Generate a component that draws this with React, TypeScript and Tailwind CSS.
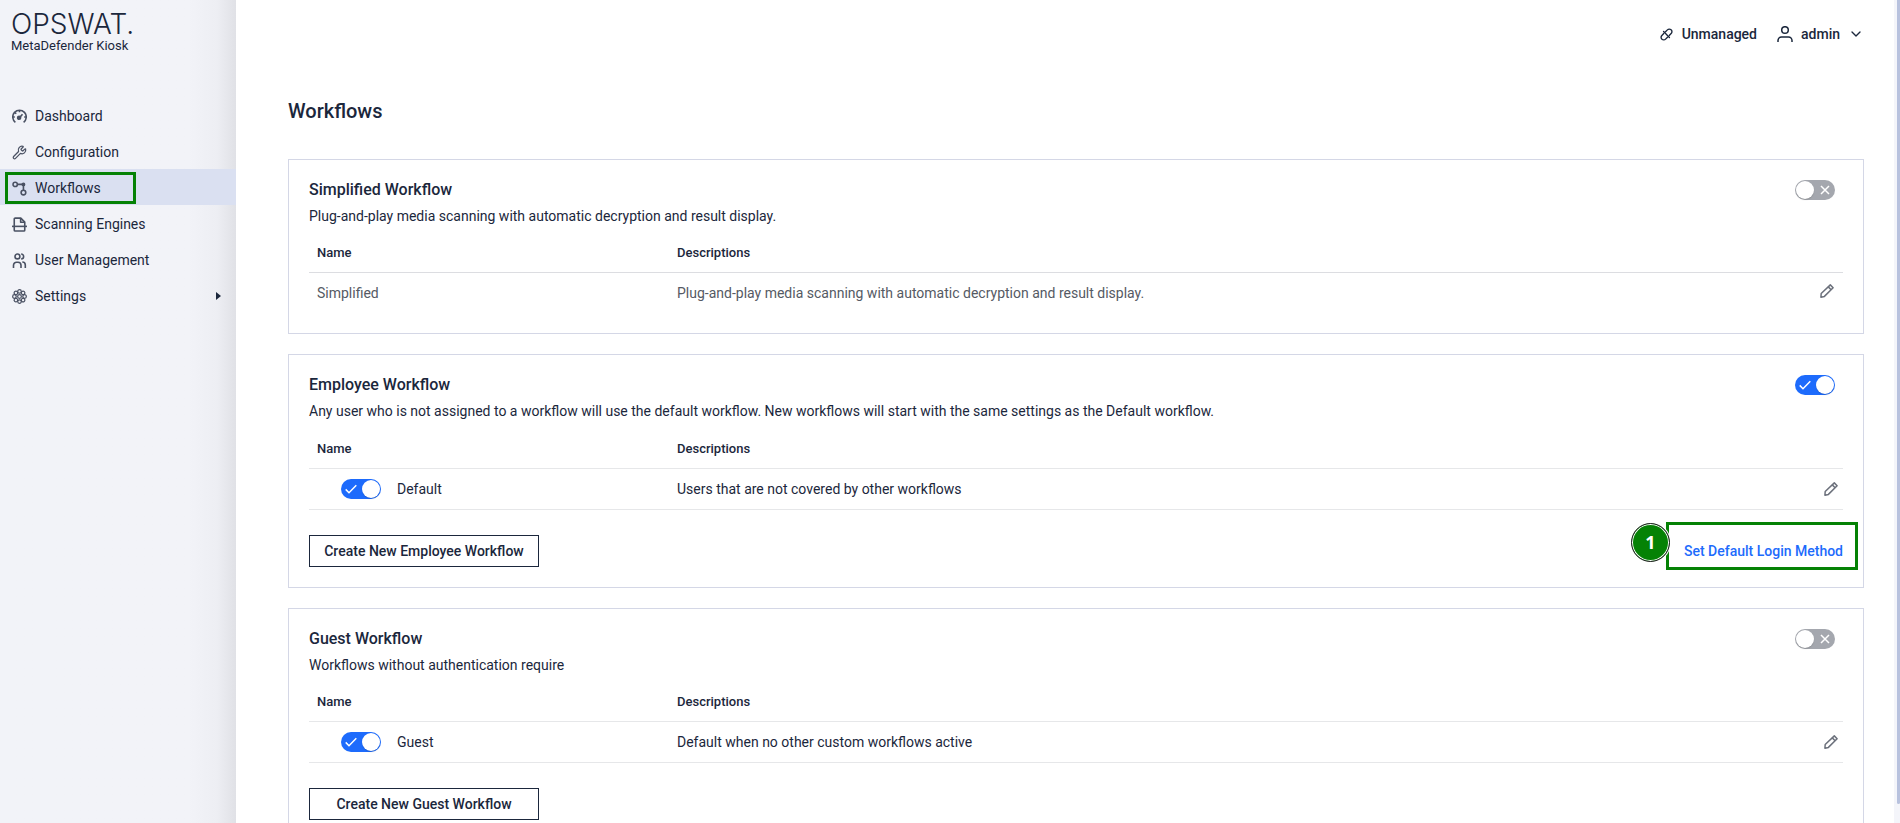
import React, { useState } from 'react';
import { ChevronDown, Wrench } from 'lucide-react';

interface IconProps {
  className?: string;
}

const DashboardIcon = ({ className }: IconProps) => (
  <svg viewBox="0 0 16 16" fill="none" stroke="currentColor" strokeWidth="1.7" className={className}>
    <path d="M3.6 14.2A7.2 7.2 0 1 1 12.4 14.2" />
    <path d="M8 1.5v2M1 8.6h2M13 8.6h2M3.2 3.8l1.3 1.3" />
    <path d="M8 9.3l3.2-3.8" />
    <circle cx="7.6" cy="9.4" r="1.6" fill="currentColor" />
  </svg>
);

const WorkflowIcon = ({ className }: IconProps) => (
  <svg viewBox="0 0 16 16" fill="none" stroke="currentColor" strokeWidth="1.7" className={className}>
    <circle cx="3.4" cy="3.6" r="2.3" />
    <path d="M5.7 3.6h6.5v6.2" />
    <circle cx="12.2" cy="3.6" r="1.2" fill="currentColor" />
    <circle cx="12.2" cy="12.3" r="2.5" />
  </svg>
);

const ScanIcon = ({ className }: IconProps) => (
  <svg viewBox="0 0 16 16" fill="none" stroke="currentColor" strokeWidth="1.7" strokeLinejoin="round" className={className}>
    <path d="M2.4 9.5V2.2a1 1 0 0 1 1-1h6l4.2 4.2v4.1" />
    <path d="M9.2 1.4v4.2h4.2" />
    <path d="M0 10h16" />
    <path d="M2.4 10v4a1 1 0 0 0 1 1h9.2a1 1 0 0 0 1-1v-4" />
  </svg>
);

const UsersIcon = ({ className }: IconProps) => (
  <svg viewBox="0 0 16 16" fill="none" stroke="currentColor" strokeWidth="1.7" className={className}>
    <circle cx="5.8" cy="3.7" r="2.6" />
    <path d="M9.8 1.1a2.6 2.6 0 1 1 0 5.2" />
    <path d="M1.6 16v-3a3.2 3.2 0 0 1 3.2-3.2h1.6A3.2 3.2 0 0 1 9.6 13v3" />
    <path d="M11 9.6a3.2 3.2 0 0 1 3.2 3.2V16" />
  </svg>
);

const GearIcon = ({ className }: IconProps) => (
  <svg viewBox="0 0 16 16" fill="none" stroke="currentColor" strokeWidth="1.3" className={className}>
    {[0, 45, 90, 135, 180, 225, 270, 315].map((angle) => (
      <circle key={angle} cx="8" cy="2.6" r="1.9" transform={`rotate(${angle} 8 8)`} />
    ))}
    <circle cx="8" cy="8" r="2" />
  </svg>
);

const UnlinkIcon = ({ className }: IconProps) => (
  <svg viewBox="0 0 16 16" fill="none" stroke="currentColor" strokeWidth="1.7" strokeLinecap="round" className={className}>
    <path d="M6.8 4.6l2.3-2.3a3.2 3.2 0 0 1 4.6 0 3.2 3.2 0 0 1 0 4.6l-2.3 2.3" />
    <path d="M9.2 11.4l-2.3 2.3a3.2 3.2 0 0 1-4.6 0 3.2 3.2 0 0 1 0-4.6l2.3-2.3" />
    <path d="M4.4 4.4l7.2 7.2" />
  </svg>
);

const UserIcon = ({ className }: IconProps) => (
  <svg viewBox="0 0 16 16" fill="none" stroke="currentColor" strokeWidth="1.5" className={className}>
    <circle cx="8" cy="4" r="3.3" />
    <path d="M1 16v-1.5a3.5 3.5 0 0 1 3.5-3.5h7a3.5 3.5 0 0 1 3.5 3.5V16" />
  </svg>
);

const PencilIcon = ({ className }: IconProps) => (
  <svg viewBox="0 0 14 14" fill="none" stroke="currentColor" strokeWidth="1.5" strokeLinejoin="round" className={className}>
    <path d="M10.3.9l2.8 2.8-8.7 8.7-3.5.8.3-3.7z" />
    <path d="M8.3 2.9l2.8 2.8" />
  </svg>
);

const navItems = [
  { label: 'Dashboard', icon: DashboardIcon },
  { label: 'Configuration', icon: Wrench },
  { label: 'Workflows', icon: WorkflowIcon, active: true },
  { label: 'Scanning Engines', icon: ScanIcon },
  { label: 'User Management', icon: UsersIcon },
  { label: 'Settings', icon: GearIcon, expandable: true },
];

function Toggle({ label, defaultChecked = false }: { label: string; defaultChecked?: boolean }) {
  const [checked, setChecked] = useState(defaultChecked);

  return (
    <span className="relative block h-5 w-10 shrink-0">
      <input
        type="checkbox"
        aria-label={label}
        checked={checked}
        onChange={(e) => setChecked(e.target.checked)}
        className="block h-5 w-10 cursor-pointer appearance-none rounded-full bg-[#a4a7ae] checked:bg-[#1d6bfc]"
      />
      <span
        className={`pointer-events-none absolute top-0.5 size-4 rounded-full bg-white shadow-[0_1px_2px_rgba(0,0,0,0.4)] ring-1 ring-white ${
          checked ? 'right-0.5' : 'left-0.5'
        }`}
      />
      {checked ? (
        <svg viewBox="0 0 12 10" fill="none" stroke="white" strokeWidth="1.5" className="pointer-events-none absolute left-1 top-[5px] h-[10px] w-3">
          <path d="M.7 5.4l3.3 3.3L11.3 1.2" />
        </svg>
      ) : (
        <svg viewBox="0 0 10 10" fill="none" stroke="white" strokeWidth="1.5" className="pointer-events-none absolute right-[5px] top-[5px] size-[10px]">
          <path d="M1 1l8 8M9 1L1 9" />
        </svg>
      )}
    </span>
  );
}

function Sidebar() {
  return (
    <aside className="w-[236px] shrink-0 bg-linear-to-r from-[#f2f3f8] from-80% via-[#edeef3] via-92% to-[#e0e1e6]">
      <div className="px-[11px] pt-2 text-[#1b273c]">
        <div className="font-[Inter] text-[28px] leading-8 font-light">OPSWAT.</div>
        <div className="text-[13px] leading-3">MetaDefender Kiosk</div>
      </div>
      <nav className="mt-[45px]">
        {navItems.map(({ label, icon: Icon, active, expandable }) => (
          <a
            key={label}
            href="#"
            className={`relative flex h-9 items-center gap-2 pt-0.5 pr-[15px] pl-3 text-sm text-[#1b273c] ${active ? 'bg-[#dae0f1]' : ''}`}
          >
            <Icon className="size-[15px] text-[#4a5163]" />
            <span>{label}</span>
            {expandable && (
              <svg viewBox="0 0 5 8" className="ml-auto h-2 w-[5px] fill-[#1b273c]">
                <path d="M0 0l5 4-5 4z" />
              </svg>
            )}
            {active && <span className="absolute top-[3px] left-[5px] h-[32px] w-[131px] border-3 border-[#058205]" />}
          </a>
        ))}
      </nav>
    </aside>
  );
}

function TopBar() {
  return (
    <header className="flex h-[68px] items-center justify-end gap-5 text-sm font-medium">
      <div className="flex items-center gap-[9px]">
        <UnlinkIcon className="size-[13px]" />
        <span>Unmanaged</span>
      </div>
      <button className="flex items-center gap-2">
        <UserIcon className="size-4" />
        <span>admin</span>
        <ChevronDown className="size-4" />
      </button>
    </header>
  );
}

interface WorkflowCardProps {
  title: string;
  description: string;
  name: string;
  detail: string;
  enabled?: boolean;
  createLabel?: string;
  loginMethod?: boolean;
}

function WorkflowCard({ title, description, name, detail, enabled, createLabel, loginMethod }: WorkflowCardProps) {
  const editable = Boolean(createLabel);

  return (
    <section className="border border-[#d4d7e6] p-5">
      <div className="flex items-start justify-between pr-2">
        <h2 className="text-base leading-5 font-medium">{title}</h2>
        <Toggle label={title} defaultChecked={enabled} />
      </div>
      <p className="mt-1.5 text-sm">{description}</p>

      <table className="mt-1.5 w-full table-fixed text-left">
        <thead>
          <tr className={`border-b text-[13px] ${editable ? 'h-[41px] border-[#e6e7e9]' : 'h-10 border-[#dcdde1]'}`}>
            <th className="w-[360px] px-2 pt-0.5 font-medium">Name</th>
            <th className="px-2 pt-0.5 font-medium">Descriptions</th>
            <th className="w-12" aria-label="Actions" />
          </tr>
        </thead>
        <tbody>
          <tr className={editable ? 'h-[41px] border-b border-[#e6e7e9] text-sm' : 'h-[41px] text-sm text-[#555a64]'}>
            <td className="px-2">
              {editable ? (
                <div className="flex items-center gap-4 pl-6">
                  <Toggle label={name} defaultChecked />
                  <span>{name}</span>
                </div>
              ) : (
                name
              )}
            </td>
            <td className="px-2">{detail}</td>
            <td className={editable ? 'pr-[5px]' : 'pr-[9px] pb-1'}>
              <button aria-label={`Edit ${name}`} className="ml-auto block text-[#6c717c]">
                <PencilIcon className="size-3.5" />
              </button>
            </td>
          </tr>
        </tbody>
      </table>

      {createLabel && (
        <div className="mt-[25px] flex items-center justify-between">
          <button className="h-8 w-[230px] border border-[#1b273c] text-sm font-medium">{createLabel}</button>
          {loginMethod && (
            <div className="relative">
              <a href="#" className="text-sm font-medium text-[#1d6bfc]">
                Set Default Login Method
              </a>
              <span className="pointer-events-none absolute -top-[17px] -right-[15px] -left-[18px] h-[48px] border-3 border-[#058205]" />
              <span className="absolute -top-4 -left-[53px] flex size-[39px] items-center justify-center rounded-full border border-[#222] bg-[#058205] font-['Open_Sans'] text-lg font-bold text-white ring-1 ring-white inset-ring-1 inset-ring-white">
                1
              </span>
            </div>
          )}
        </div>
      )}
    </section>
  );
}

export default function App() {
  return (
    <div className="flex h-screen overflow-hidden bg-white font-[Roboto,sans-serif] text-[#1b273c]">
      <Sidebar />
      <main className="min-w-0 flex-1 overflow-hidden pr-[30px] pl-[52px]">
        <TopBar />
        <h1 className="mt-[29px] text-xl font-medium">Workflows</h1>
        <div className="mt-[34px] flex flex-col gap-5">
          <WorkflowCard
            title="Simplified Workflow"
            description="Plug-and-play media scanning with automatic decryption and result display."
            name="Simplified"
            detail="Plug-and-play media scanning with automatic decryption and result display."
          />
          <WorkflowCard
            title="Employee Workflow"
            description="Any user who is not assigned to a workflow will use the default workflow. New workflows will start with the same settings as the Default workflow."
            name="Default"
            detail="Users that are not covered by other workflows"
            enabled
            createLabel="Create New Employee Workflow"
            loginMethod
          />
          <WorkflowCard
            title="Guest Workflow"
            description="Workflows without authentication require"
            name="Guest"
            detail="Default when no other custom workflows active"
            createLabel="Create New Guest Workflow"
          />
        </div>
      </main>
      <div className="w-1.5 shrink-0 bg-[#f4f5fa] pb-[19px] pl-[3px]">
        <div className="h-full rounded-b-sm bg-[#b8c2de]" />
      </div>
    </div>
  );
}
